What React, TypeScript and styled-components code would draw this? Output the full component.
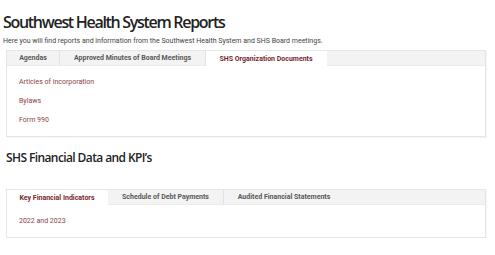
import styled, { createGlobalStyle } from 'styled-components';

const Global = createGlobalStyle`
  html, body { margin: 0; padding: 0; background: #fff; }
  body { font-family: Roboto, "Liberation Sans", sans-serif; }
`;

const Page = styled.div`
  padding: 12px 9px 0 3px;
`;

const Title = styled.h1`
  margin: 0;
  font-family: "Open Sans", sans-serif;
  font-weight: 600;
  font-size: 16px;
  letter-spacing: -1.3px;
  line-height: 20px;
  color: #222;
`;

const Intro = styled.p`
  margin: 4px 0 4px;
  font-size: 7px;
  line-height: 10px;
  color: #444;
`;

const Section = styled.section`
  margin-left: 3px;
`;

const Heading = styled.h2`
  margin: 12px 0 22px;
  font-family: "Open Sans", sans-serif;
  font-weight: 600;
  font-size: 12px;
  letter-spacing: -0.6px;
  line-height: 18px;
  color: #222;
`;

const Panel = styled.div`
  border: 1px solid #e6e6e6;
  box-shadow: 1px 1px 1px rgba(0, 0, 0, 0.04);
  background: #fff;
`;

const TabBar = styled.div`
  display: flex;
  height: 14px;
  background: #f3f3f3;
  border-bottom: 1px solid #ebebeb;
`;

const Tab = styled.div<{ $active?: boolean; $last?: boolean; $w: number }>`
  width: ${p => p.$w}px;
  flex-shrink: 0;
  display: flex;
  align-items: center;
  justify-content: center;
  font-size: 7px;
  font-weight: 700;
  color: ${p => (p.$active ? '#7a1f2e' : '#585858')};
  background: ${p => (p.$active ? '#fff' : 'transparent')};
  border-right: 1px solid ${p => (p.$active || p.$last ? 'transparent' : '#e2e2e2')};
  margin-bottom: ${p => (p.$active ? '-1px' : '0')};
`;

const List = styled.div`
  display: flex;
  flex-direction: column;
  gap: 10px;
  padding: 12px 12px 11px;
`;

const Link = styled.a`
  font-size: 7px;
  line-height: 9px;
  color: #8a4146;
  text-decoration: none;
`;

export default function App() {
  return (
    <Page>
      <Global />
      <Title>Southwest Health System Reports</Title>
      <Intro>Here you will find reports and information from the Southwest Health System and SHS Board meetings.</Intro>
      <Section>
        <Panel>
          <TabBar>
            <Tab $w={52}>Agendas</Tab>
            <Tab $w={145}>Approved Minutes of Board Meetings</Tab>
            <Tab $w={120} $active>SHS Organization Documents</Tab>
          </TabBar>
          <List>
            <Link>Articles of incorporation</Link>
            <Link>Bylaws</Link>
            <Link>Form 990</Link>
          </List>
        </Panel>
        <Heading>SHS Financial Data and KPI’s</Heading>
        <Panel>
          <TabBar>
            <Tab $w={100} $active>Key Financial Indicators</Tab>
            <Tab $w={115}>Schedule of Debt Payments</Tab>
            <Tab $w={120} $last>Audited Financial Statements</Tab>
          </TabBar>
          <List>
            <Link>2022 and 2023</Link>
          </List>
        </Panel>
      </Section>
    </Page>
  );
}
